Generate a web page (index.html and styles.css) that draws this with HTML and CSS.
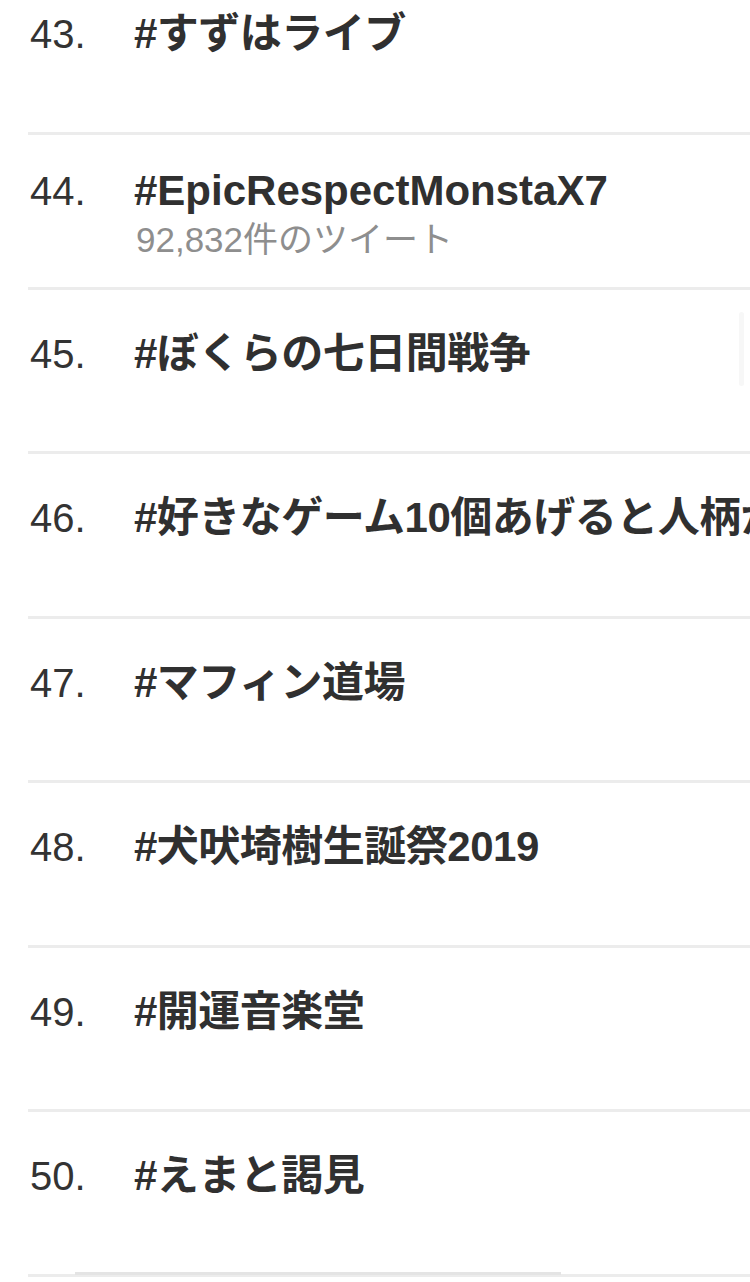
FILE: index.html
```html
<!DOCTYPE html>
<html lang="ja">
<head>
<meta charset="utf-8">
<title>トレンド</title>
<link rel="stylesheet" href="styles.css">
</head>
<body>
<ol class="trends">
  <li class="row"><span class="rank">43.</span><div class="body"><div class="tag">#すずはライブ</div></div></li>
  <li class="row has-meta"><span class="rank">44.</span><div class="body"><div class="tag latin">#EpicRespectMonstaX7</div><div class="meta">92,832件のツイート</div></div></li>
  <li class="row"><span class="rank">45.</span><div class="body"><div class="tag">#ぼくらの七日間戦争</div></div></li>
  <li class="row"><span class="rank">46.</span><div class="body"><div class="tag">#好きなゲーム10個あげると人柄がわかる</div></div></li>
  <li class="row"><span class="rank">47.</span><div class="body"><div class="tag">#マフィン道場</div></div></li>
  <li class="row"><span class="rank">48.</span><div class="body"><div class="tag">#犬吠埼樹生誕祭2019</div></div></li>
  <li class="row"><span class="rank">49.</span><div class="body"><div class="tag">#開運音楽堂</div></div></li>
  <li class="row"><span class="rank">50.</span><div class="body"><div class="tag">#えまと謁見</div></div></li>
</ol>
<div class="scroll-thumb"></div>
<div class="bottom-shadow"></div>
</body>
</html>
```

FILE: styles.css
```css
html, body {
  margin: 0;
  padding: 0;
  background: #ffffff;
  width: 750px;
  height: 1282px;
  overflow: hidden;
  position: relative;
  font-family: "Liberation Sans", "Noto Sans CJK JP", sans-serif;
}

.trends {
  list-style: none;
  margin: -30px 0 0 28px;
  padding: 0;
}

.row {
  display: flex;
  align-items: flex-start;
  height: 161.5px;
  box-sizing: content-box;
  padding: 0;
  border-bottom: 3px solid #ececec;
  white-space: nowrap;
}

.row.has-meta {
  height: 152px;
}

.rank {
  flex: 0 0 104px;
  padding-left: 2px;
  margin-top: 40px;
  font-size: 40px;
  line-height: 48px;
  color: #333333;
}

.has-meta .rank {
  margin-top: 32px;
}

.body {
  margin-top: 40px;
  display: flex;
  flex-direction: column;
}

.has-meta .body {
  margin-top: 32px;
}

.tag {
  font-size: 42px;
  line-height: 48px;
  font-weight: 700;
  color: #303030;
  letter-spacing: -0.5px;
}

.tag.latin {
  letter-spacing: 0;
}

.meta {
  font-size: 35px;
  line-height: 50px;
  color: #8e8e8e;
  padding-left: 2px;
}

.scroll-thumb {
  position: absolute;
  left: 739px;
  top: 312px;
  width: 5px;
  height: 74px;
  border-radius: 3px;
  background: #f7f7f7;
}

.bottom-shadow {
  position: absolute;
  left: 75px;
  top: 1272px;
  width: 486px;
  height: 3px;
  background: #e4e4e4;
}
```
